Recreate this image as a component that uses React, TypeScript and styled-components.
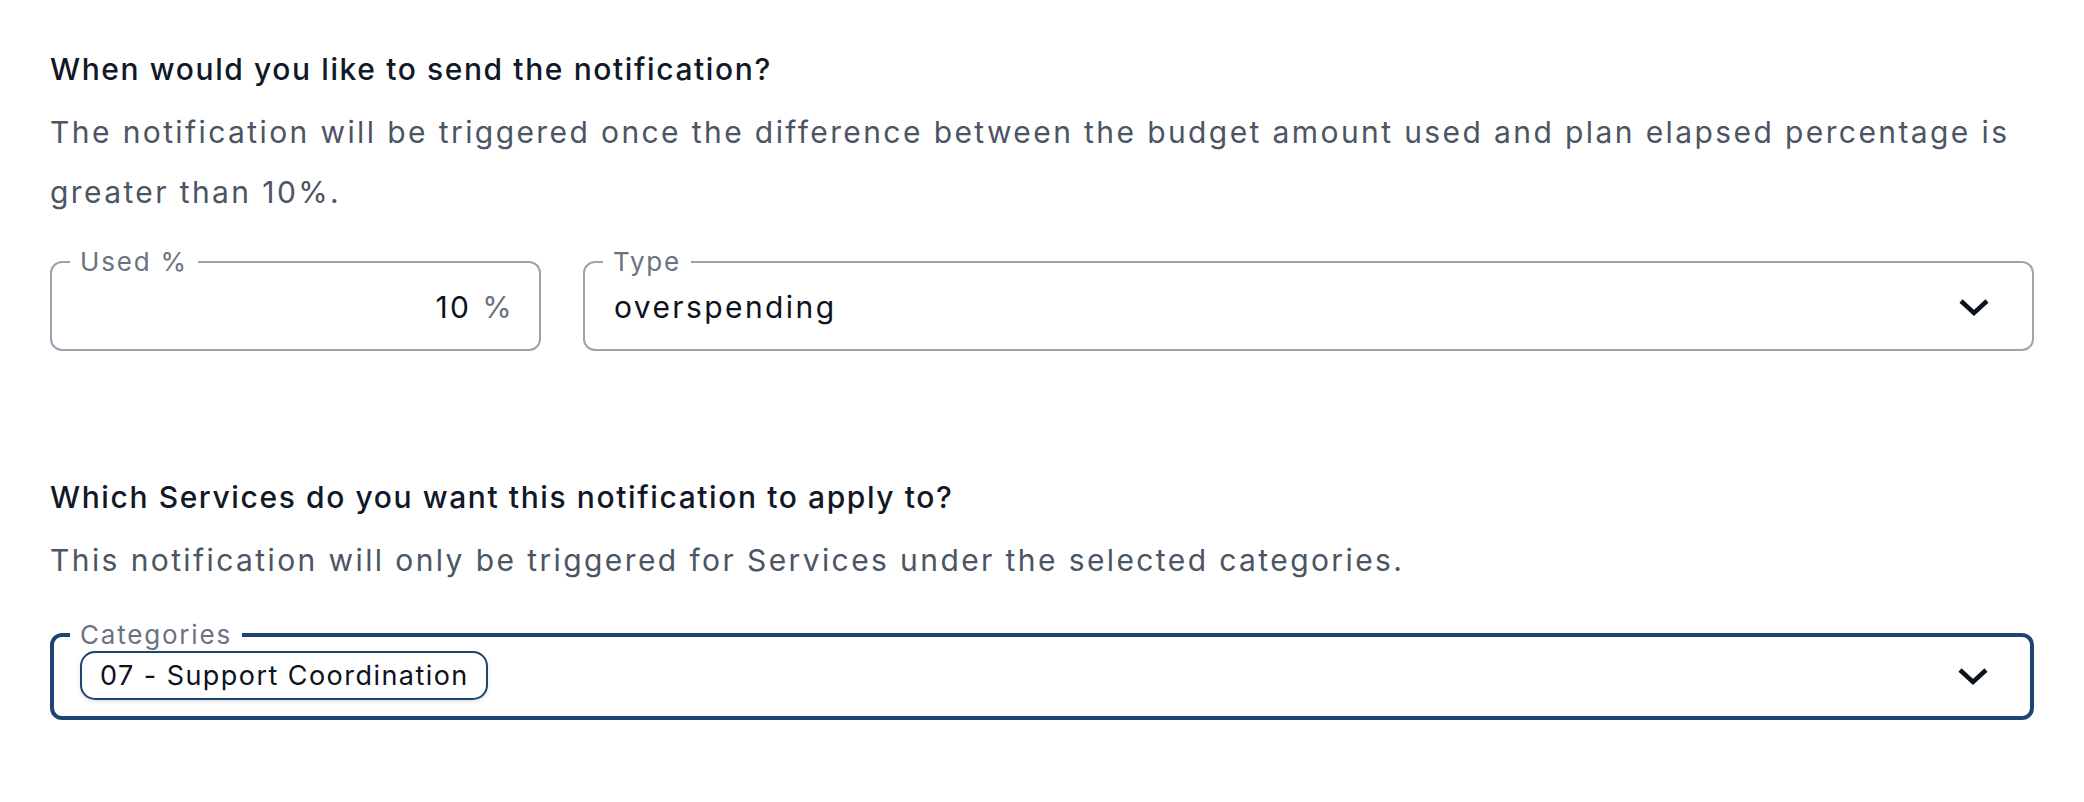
import * as React from "react";
import styled, { createGlobalStyle } from "styled-components";

const GlobalStyle = createGlobalStyle`
  html, body {
    margin: 0;
    padding: 0;
    background: #ffffff;
  }
  body {
    font-family: Inter, "Noto Sans", "Liberation Sans", sans-serif;
    -webkit-font-smoothing: antialiased;
  }
`;

const navy = "#1e4472";
const grey = "#9ca3af";

function Chevron() {
  return (
    <ChevronSvg viewBox="0 0 32 20" aria-hidden="true">
      <polyline points="3,4 16,16 29,4" />
    </ChevronSvg>
  );
}

export default function App() {
  return (
    <>
      <GlobalStyle />
      <Page>
        <Section>
          <Heading>When would you like to send the notification?</Heading>
          <Description>
            The notification will be triggered once the difference between the budget amount used and plan
            elapsed percentage is greater than 10%.
          </Description>
          <FieldRow>
            <Field>
              <Legend>Used %</Legend>
              <FieldBody $align="end">
                <Value>
                  10 <Unit>%</Unit>
                </Value>
              </FieldBody>
            </Field>
            <Field>
              <Legend>Type</Legend>
              <FieldBody>
                <Value>overspending</Value>
                <Chevron />
              </FieldBody>
            </Field>
          </FieldRow>
        </Section>

        <Section>
          <Heading>Which Services do you want this notification to apply to?</Heading>
          <Description $spaceAfter={29}>
            This notification will only be triggered for Services under the selected categories.
          </Description>
          <Field $focused>
            <Legend $focused>Categories</Legend>
            <FieldBody $compact>
              <ChipList>
                <Chip>07 - Support Coordination</Chip>
              </ChipList>
              <Chevron />
            </FieldBody>
          </Field>
        </Section>
      </Page>
    </>
  );
}

const Page = styled.div`
  display: flex;
  flex-direction: column;
  gap: 126px;
  padding: 49px 50px 0;
`;

const Section = styled.section`
  display: flex;
  flex-direction: column;
`;

const Heading = styled.h2`
  margin: 0;
  font-size: 30px;
  line-height: 40px;
  font-weight: 500;
  letter-spacing: 1.6px;
  color: #111827;
`;

const Description = styled.p<{ $spaceAfter?: number }>`
  margin: 13px 0 ${({ $spaceAfter = 24 }) => $spaceAfter}px;
  font-size: 30px;
  line-height: 60px;
  font-weight: 400;
  letter-spacing: 2.4px;
  color: #4b5563;
`;

const FieldRow = styled.div`
  display: grid;
  grid-template-columns: 491px 1fr;
  gap: 42px;
`;

const Field = styled.fieldset<{ $focused?: boolean }>`
  margin: 0;
  padding: 0;
  min-width: 0;
  border: ${({ $focused }) => ($focused ? `4px solid ${navy}` : `2px solid ${grey}`)};
  border-radius: 12px;
`;

const Legend = styled.legend<{ $focused?: boolean }>`
  margin-left: ${({ $focused }) => ($focused ? "16px" : "18px")};
  padding: 0 10px;
  font-size: 26px;
  line-height: 31px;
  letter-spacing: 1.8px;
  color: #6b7280;
`;

const FieldBody = styled.div<{ $align?: "start" | "end"; $compact?: boolean }>`
  display: flex;
  align-items: center;
  justify-content: ${({ $align }) => ($align === "end" ? "flex-end" : "space-between")};
  gap: 16px;
  height: ${({ $compact }) => ($compact ? "auto" : "72px")};
  padding: ${({ $compact }) => ($compact ? "1px 41px 16px 26px" : "0 42px 13px 29px")};
  box-sizing: border-box;

  ${({ $align }) => $align === "end" && "padding-right: 25px;"}
`;

const Value = styled.span`
  font-size: 30px;
  letter-spacing: 2.4px;
  color: #0b1220;
`;

const Unit = styled.span`
  color: #6b7280;
`;

const ChipList = styled.div`
  display: flex;
  flex-wrap: wrap;
  gap: 8px;
`;

const Chip = styled.span`
  display: inline-flex;
  align-items: center;
  height: 49px;
  box-sizing: border-box;
  padding: 0 17px 0 18px;
  border: 2px solid ${navy};
  border-radius: 15px;
  background: #ffffff;
  box-shadow: 0 2px 4px rgba(15, 23, 42, 0.12);
  font-size: 27px;
  letter-spacing: 1.45px;
  color: #0b1220;
`;

const ChevronSvg = styled.svg`
  flex: none;
  width: 32px;
  height: 20px;
  fill: none;
  stroke: #0b1220;
  stroke-width: 4.5;
`;
